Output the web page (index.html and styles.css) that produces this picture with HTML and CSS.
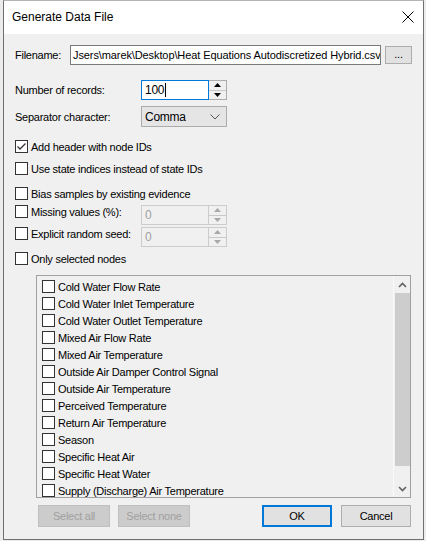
FILE: index.html
```html
<!DOCTYPE html>
<html lang="en">
<head>
    <meta charset="UTF-8">
    <title>Generate Data File</title>
    <link rel="stylesheet" href="styles.css">
</head>
<body>
    <div class="window">
        <div class="titlebar">
            <span class="title">Generate Data File</span>
            <svg class="close" width="12" height="12" viewBox="0 0 12 12">
                <path d="M0.5 0.5 L11.5 11.5 M11.5 0.5 L0.5 11.5" stroke="#000" stroke-width="1" fill="none"/>
            </svg>
        </div>

        <div class="content">
            <div class="row row-file">
                <label class="lbl lbl-file">Filename:</label>
                <div class="textbox file-path">Jsers\marek\Desktop\Heat Equations Autodiscretized Hybrid.csv</div>
                <div class="btn btn-browse">...</div>
            </div>

            <div class="row row-num">
                <label class="lbl lbl-wide">Number of records:</label>
                <div class="spin focused">
                    <div class="spin-text">100<span class="caret"></span></div>
                    <div class="spin-btns">
                        <span class="spin-btn"><svg width="7" height="4" viewBox="0 0 7 4"><polygon points="0,4 7,4 3.5,0" /></svg></span>
                        <span class="spin-btn"><svg width="7" height="4" viewBox="0 0 7 4"><polygon points="0,0 7,0 3.5,4" /></svg></span>
                    </div>
                </div>
            </div>

            <div class="row row-sep">
                <label class="lbl lbl-wide">Separator character:</label>
                <div class="combo">
                    <span>Comma</span>
                    <svg width="10" height="6" viewBox="0 0 10 6"><polyline points="0.5,0.5 5,5 9.5,0.5" fill="none" stroke="#555" stroke-width="1"/></svg>
                </div>
            </div>

            <div class="row check-row cb-header">
                <span class="cb checked"><svg width="11" height="11" viewBox="0 0 11 11"><polyline points="1.5,5.5 4,8 9.5,2.5" fill="none" stroke="#333" stroke-width="1.3"/></svg></span>
                <span class="cb-label">Add header with node IDs</span>
            </div>

            <div class="row check-row cb-indices">
                <span class="cb"></span>
                <span class="cb-label">Use state indices instead of state IDs</span>
            </div>

            <div class="row check-row cb-bias">
                <span class="cb"></span>
                <span class="cb-label">Bias samples by existing evidence</span>
            </div>

            <div class="row row-opt row-missing">
                <div class="check-group">
                    <span class="cb"></span>
                    <span class="cb-label">Missing values (%):</span>
                </div>
                <div class="spin disabled">
                    <div class="spin-text">0</div>
                    <div class="spin-btns">
                        <span class="spin-btn"><svg width="7" height="4" viewBox="0 0 7 4"><polygon points="0,4 7,4 3.5,0" /></svg></span>
                        <span class="spin-btn"><svg width="7" height="4" viewBox="0 0 7 4"><polygon points="0,0 7,0 3.5,4" /></svg></span>
                    </div>
                </div>
            </div>

            <div class="row row-opt row-seed">
                <div class="check-group">
                    <span class="cb"></span>
                    <span class="cb-label">Explicit random seed:</span>
                </div>
                <div class="spin disabled">
                    <div class="spin-text">0</div>
                    <div class="spin-btns">
                        <span class="spin-btn"><svg width="7" height="4" viewBox="0 0 7 4"><polygon points="0,4 7,4 3.5,0" /></svg></span>
                        <span class="spin-btn"><svg width="7" height="4" viewBox="0 0 7 4"><polygon points="0,0 7,0 3.5,4" /></svg></span>
                    </div>
                </div>
            </div>

            <div class="row check-row cb-only">
                <span class="cb"></span>
                <span class="cb-label">Only selected nodes</span>
            </div>

            <div class="node-list">
                <div class="items">
                    <div class="item"><span class="cb"></span><span>Cold Water Flow Rate</span></div>
                    <div class="item"><span class="cb"></span><span>Cold Water Inlet Temperature</span></div>
                    <div class="item"><span class="cb"></span><span>Cold Water Outlet Temperature</span></div>
                    <div class="item"><span class="cb"></span><span>Mixed Air Flow Rate</span></div>
                    <div class="item"><span class="cb"></span><span>Mixed Air Temperature</span></div>
                    <div class="item"><span class="cb"></span><span>Outside Air Damper Control Signal</span></div>
                    <div class="item"><span class="cb"></span><span>Outside Air Temperature</span></div>
                    <div class="item"><span class="cb"></span><span>Perceived Temperature</span></div>
                    <div class="item"><span class="cb"></span><span>Return Air Temperature</span></div>
                    <div class="item"><span class="cb"></span><span>Season</span></div>
                    <div class="item"><span class="cb"></span><span>Specific Heat Air</span></div>
                    <div class="item"><span class="cb"></span><span>Specific Heat Water</span></div>
                    <div class="item"><span class="cb"></span><span>Supply (Discharge) Air Temperature</span></div>
                </div>
                <div class="scrollbar">
                    <span class="arrow"><svg width="9" height="6" viewBox="0 0 9 6"><polyline points="1,5 4.5,1.5 8,5" fill="none" stroke="#606060" stroke-width="1.6"/></svg></span>
                    <span class="thumb"></span>
                    <span class="arrow"><svg width="9" height="6" viewBox="0 0 9 6"><polyline points="1,1 4.5,4.5 8,1" fill="none" stroke="#606060" stroke-width="1.6"/></svg></span>
                </div>
            </div>

            <div class="row buttons">
                <div class="btn btn-wide disabled">Select all</div>
                <div class="btn btn-wide disabled">Select none</div>
                <div class="spacer"></div>
                <div class="btn btn-dialog default">OK</div>
                <div class="btn btn-dialog">Cancel</div>
            </div>
        </div>
    </div>
</body>
</html>
```

FILE: styles.css
```css
:root {
    --form-bg: #f0f0f0;
    --btn-bg: #e1e1e1;
    --btn-border: #adadad;
    --accent: #0078d7;
    --disabled-text: #a0a0a0;
}

* {
    margin: 0;
    padding: 0;
    box-sizing: border-box;
}

body {
    background: #ececec;
    font-family: "Liberation Sans", Arial, sans-serif;
    font-size: 11px;
    letter-spacing: -0.25px;
    color: #000;
}

.window {
    margin-left: 3px;
    width: 421px;
    height: 540px;
    background: var(--form-bg);
    border: 1px solid #6f6f6f;
    border-top-color: #b4b4b4;
}

.titlebar {
    height: 33px;
    background: #fff;
    display: flex;
    align-items: center;
    justify-content: space-between;
    padding: 0 9px 1px 8px;
}

.title {
    font-size: 12px;
    letter-spacing: 0;
}

.close {
    display: block;
}

.content {
    padding-left: 11px;
}

.row {
    display: flex;
    align-items: center;
}

.lbl-file {
    width: 55px;
}

.lbl-wide {
    width: 126px;
}

.row-file {
    margin-top: 11px;
    height: 20px;
}

.textbox {
    background: #fff;
    border: 1px solid #7a7a7a;
    height: 20px;
    line-height: 18px;
    padding-left: 2px;
    white-space: nowrap;
    overflow: hidden;
}

.file-path {
    width: 311px;
    letter-spacing: -0.1px;
}

.btn {
    background: var(--btn-bg);
    border: 1px solid var(--btn-border);
    display: flex;
    align-items: center;
    justify-content: center;
}

.btn-browse {
    width: 27px;
    height: 18px;
    margin-left: 4px;
    margin-top: 1px;
    align-self: flex-start;
    padding-bottom: 2px;
}

/* numeric up/down */
.spin {
    display: flex;
    width: 86px;
    height: 20px;
}

.spin-text {
    width: 68px;
    background: #fff;
    border: 1px solid #7a7a7a;
    padding-left: 3px;
    display: flex;
    align-items: center;
    font-size: 12px;
}

.caret {
    display: inline-block;
    width: 1px;
    height: 14px;
    background: #000;
    margin-left: 1px;
}

.spin-btns {
    width: 18px;
    display: flex;
    flex-direction: column;
    border: 1px solid #adadad;
    border-left: none;
    background: #f0f0f0;
}

.spin-btn {
    flex: 1;
    display: flex;
    align-items: center;
    justify-content: center;
}

.spin-btn + .spin-btn {
    border-top: 1px solid #c8c8c8;
}

.spin-btn polygon {
    fill: #000;
}

.spin.focused .spin-text {
    border-color: var(--accent);
}

.spin.disabled .spin-text {
    background: var(--form-bg);
    border-color: #cccccc;
    color: var(--disabled-text);
}

.spin.disabled .spin-btns {
    border-color: #cccccc;
}

.spin.disabled .spin-btn polygon {
    fill: #a8a8a8;
}

.row-num {
    margin-top: 15px;
}

.row-sep {
    margin-top: 6px;
}

.combo {
    width: 86px;
    height: 21px;
    background: #e5e5e5;
    border: 1px solid #acacac;
    display: flex;
    align-items: center;
    justify-content: space-between;
    padding: 0 6px 0 3px;
    font-size: 12px;
}

/* checkboxes */
.cb {
    width: 13px;
    height: 13px;
    border: 1px solid #333;
    background: #fff;
    flex-shrink: 0;
    display: flex;
    align-items: center;
    justify-content: center;
}

.check-row,
.check-group {
    display: flex;
    align-items: center;
    height: 13px;
    gap: 3px;
}

.check-group {
    width: 126px;
}

.cb-header { margin-top: 13px; }
.cb-indices { margin-top: 9px; }
.cb-bias { margin-top: 12px; }

.row-opt {
    align-items: flex-start;
}

.row-missing { margin-top: 5px; }
.row-seed { margin-top: 2px; }
.cb-only { margin-top: 5px; }

/* node list */
.node-list {
    margin-top: 10px;
    margin-left: 21px;
    width: 375px;
    height: 223px;
    border: 1px solid #a0a0a0;
    display: flex;
}

.items {
    flex: 1;
    padding-top: 2px;
}

.item {
    display: flex;
    align-items: center;
    gap: 3px;
    height: 17px;
    padding-left: 5px;
}

.scrollbar {
    width: 17px;
    display: flex;
    flex-direction: column;
    align-items: center;
    border-left: 1px solid #fafafa;
}

.arrow {
    height: 17px;
    width: 100%;
    display: flex;
    align-items: center;
    justify-content: center;
}

.thumb {
    width: 15px;
    height: 173px;
    background: #cdcdcd;
}

.scrollbar .arrow:last-child {
    margin-top: auto;
}

/* bottom buttons */
.buttons {
    margin-top: 7px;
    padding-left: 23px;
    width: 396px;
    height: 22px;
}

.btn-wide {
    width: 72px;
    height: 22px;
    margin-right: 8px;
}

.btn-dialog {
    width: 70px;
    height: 22px;
    margin-left: 9px;
}

.btn.disabled {
    background: #cccccc;
    border-color: #bfbfbf;
    color: var(--disabled-text);
}

.btn.default {
    border: 2px solid var(--accent);
}

.spacer {
    flex: 1;
}
```
